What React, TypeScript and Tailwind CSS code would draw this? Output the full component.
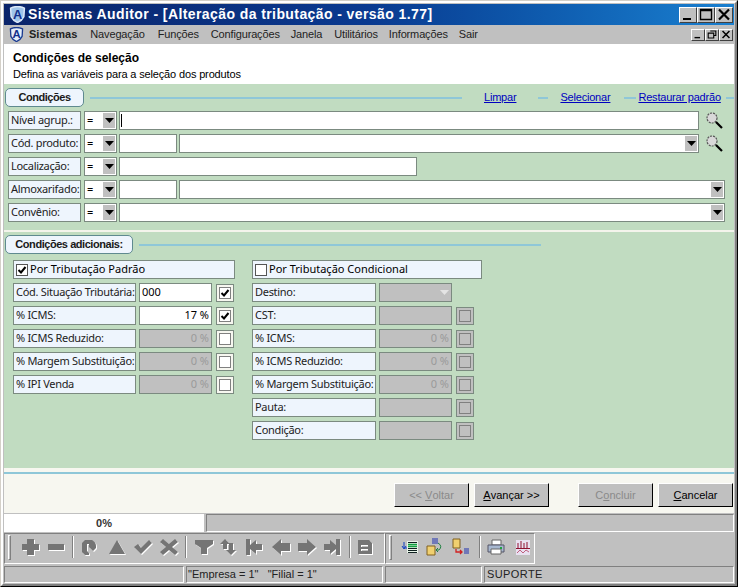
import React from 'react'

const raised = 'border border-t-white border-l-white border-r-[#404040] border-b-[#404040] bg-[#c0c0c0]'
const sunken = 'border border-t-[#808080] border-l-[#808080] border-r-white border-b-white'
const field = 'border border-[#7b8a80] h-[19px]'

function Logo({ size, light }: { size: number; light?: boolean }) {
  return (
    <svg width={size} height={size} viewBox="0 0 16 16" className="shrink-0">
      <path d="M1.5 2 Q8 -1 14.5 2 L14 10 Q12 14 8 15.5 Q4 14 2 10 Z" fill={light ? '#e4eefa' : '#9fc4ea'} stroke={light ? '#1a3a90' : '#dbe8f8'} strokeWidth="1.4" />
      <text x="8" y="12" textAnchor="middle" fontSize="12" fontWeight="700" fill="#12308c" fontFamily="Liberation Sans">A</text>
    </svg>
  )
}

function Arrow({ disabled }: { disabled?: boolean }) {
  return (
    <svg width="9" height="5" viewBox="0 0 9 5">
      <path d="M0 0 H9 L4.5 5 Z" fill={disabled ? '#e4e4e4' : '#000'} />
    </svg>
  )
}

function Combo({ className = '' }: { className?: string }) {
  return (
    <div className={`${field} bg-white flex justify-end items-center p-[1px] ${className}`}>
      <div className="w-[12px] h-[15px] bg-[#c0c0c0] flex items-center justify-center"><Arrow /></div>
    </div>
  )
}

function Lens() {
  return (
    <svg width="17" height="17" viewBox="0 0 17 17" className="ml-[7px]">
      <circle cx="6" cy="6" r="5" fill="#d8d8d8" stroke="#555" strokeWidth="1.2" strokeDasharray="2 1" />
      <path d="M10 10 L16 16" stroke="#000" strokeWidth="2.2" />
    </svg>
  )
}

function Label({ text, className = '' }: { text: string; className?: string }) {
  return (
    <div className={`${field} bg-[#eef5fd] flex items-center pl-[2px] text-[11px] tracking-[-0.3px] text-[#222] whitespace-nowrap overflow-hidden ${className}`}>{text}</div>
  )
}

function CondRow({ label, children }: { label: string; children: React.ReactNode }) {
  return (
    <div className="flex items-center h-[19px]">
      <Label text={label} className="w-[73px] mr-[3px]" />
      <div className={`${field} w-[33px] mr-[2px] bg-white flex items-center justify-between p-[1px] pl-[2px] text-[11px]`}>
        <span>=</span>
        <div className="w-[12px] h-[15px] bg-[#c0c0c0] flex items-center justify-center"><Arrow /></div>
      </div>
      {children}
    </div>
  )
}

function Check({ checked, disabled }: { checked?: boolean; disabled?: boolean }) {
  return (
    <div className={`w-[18px] h-[18px] border border-[#7b8a80] flex items-center justify-center ${disabled ? 'bg-[#c0c0c0]' : 'bg-[#f7f7f0]'}`}>
      <div className={`w-[12px] h-[12px] border border-[#808080] flex items-center justify-center ${disabled ? 'bg-[#c0c0c0]' : 'bg-white'}`}>
        {checked && (
          <svg width="10" height="10" viewBox="0 0 10 10">
            <path d="M1.5 5 L4 7.5 L8.5 2" fill="none" stroke="#000" strokeWidth="2" />
          </svg>
        )}
      </div>
    </div>
  )
}

function TaxRow({ label, value, on, enabled, checked, right, noCheck, labelW }: {
  label: string; value?: string; on?: boolean; enabled?: boolean; checked?: boolean; right?: React.ReactNode; noCheck?: boolean; labelW: string
}) {
  return (
    <div className="flex items-center h-[19px]">
      <Label text={label} className={`${labelW} mr-[3px]`} />
      <div className={`${field} w-[73px] mr-[4px] flex items-center px-[2px] text-[11px] ${on ? 'bg-white text-black' : 'bg-[#c0c0c0] text-[#9a9a9a]'} ${value === '000' ? 'justify-start' : 'justify-end'}`}>
        {value}
        {right}
      </div>
      {!noCheck && <Check checked={checked} disabled={!enabled} />}
    </div>
  )
}

function TabTitle({ text, className }: { text: string; className: string }) {
  return (
    <div className={`h-[19px] shrink-0 bg-[#eef5fd] border border-[#5f8a90] rounded-[5px] flex items-center justify-center text-[11px] font-bold tracking-[-0.45px] text-[#1a1a1a] ${className}`}>{text}</div>
  )
}

function WinButton({ kind, small }: { kind: string; small?: boolean }) {
  const s = small ? 'w-[14px] h-[12px]' : 'w-[18px] h-[16px]'
  return (
    <div className={`${raised} ${s} flex items-center justify-center shrink-0`}>
      <svg width={small ? 10 : 14} height={small ? 9 : 13} viewBox="0 0 14 13">
        {kind === 'min' && <path d="M2 10 H10 V12 H2 Z" fill="#000" />}
        {kind === 'max' && <path d="M1.5 1.5 H12.5 V11.5 H1.5 Z M1.5 2.5 H12.5" fill="none" stroke="#000" strokeWidth="1.4" />}
        {kind === 'close' && <path d="M2 1.5 L12 11.5 M12 1.5 L2 11.5" stroke="#000" strokeWidth="2.2" />}
        {kind === 'restore' && <path d="M4.5 1.5 H12.5 V8 H10 M1.5 4.5 H9.5 V11.5 H1.5 Z" fill="none" stroke="#000" strokeWidth="1.6" />}
      </svg>
    </div>
  )
}

function WizButton({ children, disabled, className = '' }: { children: React.ReactNode; disabled?: boolean; className?: string }) {
  return (
    <div className={`w-[75px] h-[24px] bg-[#c0c0c0] border border-t-white border-l-white border-r-black border-b-black flex items-center justify-center text-[11px] ${disabled ? 'text-[#8a8a8a]' : 'text-black'} ${className}`}>{children}</div>
  )
}

function ToolIcon({ d, className = '' }: { d: string; className?: string }) {
  return (
    <svg width="22" height="20" viewBox="0 0 22 20" className={`shrink-0 ${className}`}>
      <path d={d} fill="#fff" transform="translate(1 1)" />
      <path d={d} fill="#757575" />
    </svg>
  )
}

function Sep({ className = '' }: { className?: string }) {
  return <div className={`w-[2px] h-[22px] border-l border-l-[#808080] border-r border-r-white shrink-0 ${className}`} />
}

export default function App() {
  return (
    <div className="w-[738px] h-[587px] overflow-hidden bg-[#c0c0c0] border border-t-[#d4d0c8] border-l-[#d4d0c8] border-r-black border-b-black text-black">
      <div className="h-full border-t-2 border-l-2 border-r-2 border-b-2 border-t-white border-l-white border-r-[#808080] border-b-[#808080] pt-[1px] pl-[1px] pr-[1px] flex flex-col font-['Noto_Sans',sans-serif]">
        {/* barra de titulo */}
        <div className="h-[21px] shrink-0 bg-gradient-to-r from-[#0a246a] via-[#0a3a90] to-[#1a80d0] flex items-center pl-[5px] pr-[1px]">
          <Logo size={17} />
          <span className="ml-[2px] text-white font-bold text-[14px] font-['Liberation_Sans',sans-serif] tracking-[0.41px] whitespace-nowrap">Sistemas Auditor - [Alteração da tributação - versão 1.77]</span>
          <div className="ml-auto flex">
            <WinButton kind="min" />
            <WinButton kind="max" />
            <WinButton kind="close" />
          </div>
        </div>
        {/* menu */}
        <div className="h-[19px] shrink-0 flex items-center pl-[5px] pr-[1px] text-[11px] tracking-[-0.15px] font-['Liberation_Sans',sans-serif] text-[#222]">
          <Logo size={15} light />
          <span className="ml-[5px] font-bold tracking-normal">Sistemas</span>
          <span className="ml-[13px]">Navegação</span>
          <span className="ml-[13px]">Funções</span>
          <span className="ml-[12px]">Configurações</span>
          <span className="ml-[11px]">Janela</span>
          <span className="ml-[12px]">Utilitários</span>
          <span className="ml-[11px]">Informações</span>
          <span className="ml-[11px]">Sair</span>
          <div className="ml-auto flex">
            <WinButton kind="min" small />
            <WinButton kind="restore" small />
            <WinButton kind="close" small />
          </div>
        </div>
        {/* cabecalho */}
        <div className="h-[40px] shrink-0 bg-white pl-[9px] pt-[7px] text-[11px] leading-[14px] font-['Liberation_Sans',sans-serif]">
          <div className="font-bold text-[12px] leading-[15px]">Condições de seleção</div>
          <div className="mt-[1px] tracking-[-0.15px]">Defina as variáveis para a seleção dos produtos</div>
        </div>
        {/* area verde */}
        <div className="h-[384px] shrink-0 bg-[#c1dcc1] pl-[1px] flex flex-col">
          <div className="flex items-center mt-[4px] h-[19px] text-[11px] font-['Liberation_Sans',sans-serif]">
            <TabTitle text="Condições" className="w-[79px]" />
            <div className="h-[2px] bg-[#8fc7d8] ml-[6px] w-[372px]" />
            <a className="ml-[22px] text-[#0000c0] underline tracking-[-0.2px]">Limpar</a>
            <div className="h-[2px] bg-[#8fc7d8] ml-[22px] w-[10px]" />
            <a className="ml-[12px] text-[#0000c0] underline tracking-[-0.2px]">Selecionar</a>
            <div className="h-[2px] bg-[#8fc7d8] ml-[14px] w-[12px]" />
            <a className="ml-[2px] text-[#0000c0] underline tracking-[-0.2px] whitespace-nowrap">Restaurar padrão</a>
            <div className="h-[2px] bg-[#8fc7d8] ml-[5px] flex-1" />
          </div>
          <div className="flex flex-col gap-[4px] mt-[4px] pl-[3px]">
            <CondRow label="Nível agrup.:">
              <div className={`${field} w-[580px] bg-white flex items-center pl-[1px]`}><div className="w-[1px] h-[13px] bg-black" /></div>
              <Lens />
            </CondRow>
            <CondRow label="Cód. produto:">
              <div className={`${field} w-[58px] mr-[2px] bg-white`} />
              <Combo className="w-[520px]" />
              <Lens />
            </CondRow>
            <CondRow label="Localização:">
              <div className={`${field} w-[298px] bg-white`} />
            </CondRow>
            <CondRow label="Almoxarifado:">
              <div className={`${field} w-[58px] mr-[2px] bg-white`} />
              <Combo className="w-[546px]" />
            </CondRow>
            <CondRow label="Convênio:">
              <Combo className="w-[606px]" />
            </CondRow>
          </div>
          <div className="h-[2px] bg-[#f4f4ec] mt-[8px] -ml-[1px] shrink-0" />
          <div className="flex items-center mt-[3px] h-[19px] font-['Liberation_Sans',sans-serif]">
            <TabTitle text="Condições adicionais:" className="w-[128px]" />
            <div className="h-[2px] bg-[#8fc7d8] ml-[6px] w-[402px]" />
          </div>
          <div className="flex mt-[6px] pl-[8px]">
            <div className="flex flex-col gap-[4px] w-[239px]">
              <div className={`${field} w-[222px] bg-[#eef5fd] flex items-center pl-[2px] gap-[2px] text-[11px]`}>
                <div className="w-[12px] h-[12px] border border-[#555] bg-white flex items-center justify-center">
                  <svg width="10" height="10" viewBox="0 0 10 10"><path d="M1.5 5 L4 7.5 L8.5 2" fill="none" stroke="#000" strokeWidth="2" /></svg>
                </div>
                Por Tributação Padrão
              </div>
              <TaxRow labelW="w-[123px]" label="Cód. Situação Tributária:" value="000" on enabled checked />
              <TaxRow labelW="w-[123px]" label="% ICMS:" value="17 %" on enabled checked />
              <TaxRow labelW="w-[123px]" label="% ICMS Reduzido:" value="0 %" enabled />
              <TaxRow labelW="w-[123px]" label="% Margem Substituição:" value="0 %" enabled />
              <TaxRow labelW="w-[123px]" label="% IPI Venda" value="0 %" enabled />
            </div>
            <div className="flex flex-col gap-[4px]">
              <div className={`${field} w-[230px] bg-[#eef5fd] flex items-center pl-[2px] gap-[2px] text-[11px]`}>
                <div className="w-[12px] h-[12px] border border-[#555] bg-white" />
                Por Tributação Condicional
              </div>
              <TaxRow labelW="w-[124px]" label="Destino:" noCheck right={<Arrow disabled />} />
              <TaxRow labelW="w-[124px]" label="CST:" />
              <TaxRow labelW="w-[124px]" label="% ICMS:" value="0 %" />
              <TaxRow labelW="w-[124px]" label="% ICMS Reduzido:" value="0 %" />
              <TaxRow labelW="w-[124px]" label="% Margem Substituição:" value="0 %" />
              <TaxRow labelW="w-[124px]" label="Pauta:" />
              <TaxRow labelW="w-[124px]" label="Condição:" />
            </div>
          </div>
        </div>
        {/* botoes */}
        <div className="h-[45px] shrink-0 bg-[#f7f7f0] pt-[4px] flex flex-col font-['Liberation_Sans',sans-serif]">
          <div className="h-[2px] bg-[#8fc7d8] shrink-0" />
          <div className="flex mt-[9px]">
            <WizButton disabled className="ml-[390px]">&lt;&lt;&nbsp;<span className="underline">V</span>oltar</WizButton>
            <WizButton className="ml-[5px]"><span className="underline">A</span>vançar &gt;&gt;</WizButton>
            <WizButton disabled className="ml-[29px]">C<span className="underline">o</span>ncluir</WizButton>
            <WizButton className="ml-[5px]"><span className="underline">C</span>ancelar</WizButton>
          </div>
        </div>
        {/* progresso */}
        <div className="h-[18px] mt-[1px] shrink-0 flex text-[11px] font-['Liberation_Sans',sans-serif]">
          <div className="w-[200px] bg-white flex items-center justify-center font-bold text-[#333]">0%</div>
          <div className={`${sunken} ml-[2px] flex-1`} />
        </div>
        {/* barra de ferramentas */}
        <div className="h-[31px] mt-[1px] shrink-0 flex">
          <div className={`${sunken} w-[381px] flex items-center pl-[3px] pb-[3px]`}>
            <div className="w-[3px] h-[25px] border border-t-white border-l-white border-r-[#808080] border-b-[#808080] shrink-0" />
            <ToolIcon className="ml-[9px]" d="M7 2 H14 V7 H19 V13 H14 V18 H7 V13 H2 V7 H7 Z" />
            <ToolIcon className="ml-[3px]" d="M3 7 H19 V13 H3 Z" />
            <Sep className="ml-[5px]" />
            <ToolIcon className="ml-[4px]" d="M7 3 H14 Q18 5 18 9 V11 L15 14 L11 10 V7 H9 V14 L11 16 V18 H7 L4 15 V6 Z" />
            <ToolIcon className="ml-[6px]" d="M11 3 L19 17 H3 Z" />
            <ToolIcon className="ml-[4px]" d="M2 10 L6 7 L9 11 L17 3 L20 6 L9 17 Z" />
            <ToolIcon className="ml-[4px]" d="M5 2 L11 7 L17 2 L20 5 L14 10 L20 15 L17 18 L11 13 L5 18 L2 15 L8 10 L2 5 Z" />
            <Sep className="ml-[5px]" />
            <ToolIcon className="ml-[6px]" d="M2 3 H20 V7 L14 11 V17 H8 V11 L2 7 Z" />
            <ToolIcon className="ml-[2px]" d="M8 2 L13 7 H10 V12 H6 V7 H3 Z M14 18 L9 13 H12 V6 H16 V13 H19 Z" />
            <ToolIcon className="ml-[4px]" d="M3 2 H7 V8 L13 3 V7 H19 V13 H13 V17 L7 12 V18 H3 Z" />
            <ToolIcon className="ml-[5px]" d="M2 10 L11 2 V6 H20 V14 H11 V18 Z" />
            <ToolIcon className="ml-[4px]" d="M20 10 L11 2 V6 H2 V14 H11 V18 Z" />
            <ToolIcon className="ml-[3px]" d="M19 2 H15 V8 L9 3 V7 H3 V13 H9 V17 L15 12 V18 H19 Z" />
            <Sep className="ml-[6px]" />
            <ToolIcon className="ml-[2px]" d="M5 3 H16 L19 6 V17 H5 Z M8 8 V10 H15 V8 Z M8 12 V14 H15 V12 Z" />
          </div>
          <div className={`${sunken} w-[150px] flex items-center pl-[3px] pb-[3px]`}>
            <div className="w-[3px] h-[25px] border border-t-white border-l-white border-r-[#808080] border-b-[#808080] shrink-0" />
            <svg width="18" height="16" viewBox="0 0 18 16" className="ml-[9px] shrink-0">
              <path d="M6 2 H17 V14 H6 Z" fill="#e8f4e8" />
              <path d="M7 3.5 H16 M7 9.5 H16 M7 11.5 H16 M7 13.5 H16" stroke="#102020" strokeWidth="1" />
              <path d="M7 5.5 H16 M7 7.5 H16" stroke="#10a040" strokeWidth="1.4" />
              <path d="M3 3 V9 H6 M1 7 L3 10 L5 7" stroke="#1040c0" fill="none" />
            </svg>
            <svg width="18" height="18" viewBox="0 0 18 18" className="ml-[7px] shrink-0">
              <path d="M1 8 H9 V17 H1 Z" fill="#f0d070" stroke="#806020" />
              <path d="M6 1 H12 M6 3 H12 M6 5 H12" stroke="#2030b0" />
              <path d="M12 5 Q17 8 13 12 L10 12 M12 10 L10 12 L12 14" fill="none" stroke="#208040" />
            </svg>
            <svg width="18" height="18" viewBox="0 0 18 18" className="ml-[8px] shrink-0">
              <path d="M1 1 H8 V10 H1 Z" fill="#f0d070" stroke="#806020" />
              <path d="M4 11 V14 H10 M8 12 L10 14 L8 16" fill="none" stroke="#d02020" strokeWidth="1.3" />
              <path d="M12 11 H17 M12 13 H17 M12 15 H17" stroke="#2030b0" />
            </svg>
            <Sep className="ml-[9px]" />
            <svg width="18" height="16" viewBox="0 0 18 16" className="ml-[6px] shrink-0">
              <path d="M5 1 H14 V6 H5 Z" fill="#fff" stroke="#666" />
              <path d="M1 6 H17 V13 H1 Z" fill="#a8b8d0" stroke="#556" />
              <path d="M4 10 H14 V15 H4 Z" fill="#fff" stroke="#666" />
              <rect x="13" y="8" width="2" height="2" fill="#20a040" />
            </svg>
            <svg width="14" height="15" viewBox="0 0 14 15" className="ml-[11px] shrink-0">
              <path d="M0 0 H14 V15 H0 Z" fill="#e8e0f0" />
              <path d="M2 8 V3 M5 8 V1 M8 8 V3 M11 8 V2 M0 8.5 H14" stroke="#901030" />
              <path d="M1 13 L4 10 L7 13 L10 10 L13 12" fill="none" stroke="#c06080" />
            </svg>
          </div>
        </div>
        {/* status */}
        <div className="h-[17px] mt-[2px] shrink-0 flex gap-[2px] text-[11px] text-[#222] font-['Liberation_Sans',sans-serif]">
          <div className={`${sunken} w-[180px]`} />
          <div className={`${sunken} w-[197px] flex items-center pl-[1px] whitespace-pre`}>"Empresa = 1"   "Filial = 1"</div>
          <div className={`${sunken} w-[97px]`} />
          <div className={`${sunken} flex-1 flex items-center pl-[2px] text-[11px] tracking-[0.4px]`}>SUPORTE</div>
        </div>
      </div>
    </div>
  )
}
